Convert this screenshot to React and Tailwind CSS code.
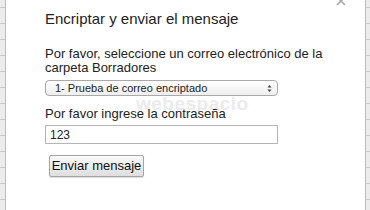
import React from 'react';

const Strip = ({ className }) => (
    <div className={`flex flex-col bg-[#ececec] ${className}`}>
        <div className="h-[8px] border-b border-[#c8c8c8] shrink-0"></div>
        {Array.from({ length: 13 }).map((_, i) => (
            <div key={i} className="h-[16px] border-b border-[#c8c8c8] shrink-0"></div>
        ))}
    </div>
);

const App = () => {
    return (
        <div className="w-[370px] h-[210px] flex overflow-hidden bg-white font-['Liberation_Sans',Arial,sans-serif] text-[#222]">
            <Strip className="w-[6px] border-r border-[#bdbdbd]" />

            <div className="relative flex-1 bg-white pl-[39px] pt-[10px]">
                {/* close */}
                <svg className="absolute top-[-4px] right-[19px]" width="10" height="10" viewBox="0 0 10 10">
                    <path d="M1 1 L9 9 M9 1 L1 9" stroke="#a8a8a8" strokeWidth="1.6" />
                </svg>

                {/* watermark */}
                <div className="absolute left-[130px] top-[90px] text-[#ebebeb] text-[19px] font-bold tracking-[0.5px] select-none">webespacio</div>

                <h1 className="text-[15px] leading-[18px]">Encriptar y enviar el mensaje</h1>

                <p className="mt-[19px] text-[13px] leading-[14px]">
                    Por favor, seleccione un correo electrónico de la carpeta Borradores
                </p>

                <div className="relative mt-[5px] w-[233px] h-[16px] rounded-[4px] border border-[#a9a9a9] bg-gradient-to-b from-white to-[#eeeeee] flex items-center pl-[9px] text-[11px]">
                    <span>1- Prueba de correo encriptado</span>
                    <svg className="absolute right-[5px] top-[3px]" width="5" height="9" viewBox="0 0 5 9">
                        <path d="M0.5 3.5 L2.5 1 L4.5 3.5 Z M0.5 5.5 L2.5 8 L4.5 5.5 Z" fill="#444" />
                    </svg>
                </div>

                <p className="relative mt-[10px] text-[13px] leading-[15px]">Por favor ingrese la contraseña</p>

                <div className="mt-[4px] w-[233px] h-[19px] border border-[#b5b5b5] flex items-center pl-[4px] text-[12px]">123</div>

                <button className="mt-[11px] ml-[4px] w-[95px] h-[22px] border border-[#a5a5a5] rounded-[2px] bg-gradient-to-b from-[#fafafa] to-[#dedede] text-[13px] text-[#111] shadow-[0_1px_1px_rgba(0,0,0,0.15)]">
                    Enviar mensaje
                </button>
            </div>

            <Strip className="w-[5px] border-l border-[#bdbdbd]" />
        </div>
    );
};

export default App;
